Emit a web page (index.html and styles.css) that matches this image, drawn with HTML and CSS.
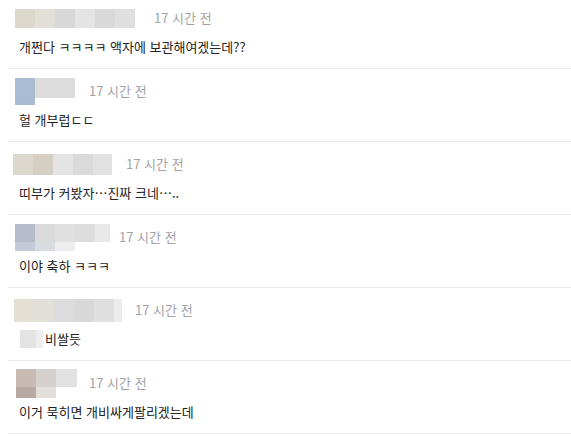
FILE: index.html
```html
<!DOCTYPE html>
<html lang="ko">
<head>
<meta charset="utf-8">
<link rel="stylesheet" href="styles.css">
</head>
<body>
<div class="list">
  <div class="comment">
    <div class="head"><span class="mosaic m1"></span><span class="time g19">17 시간 전</span></div>
    <p class="text">개쩐다 ㅋㅋㅋㅋ 액자에 보관해여겠는데??</p>
  </div>
  <div class="comment">
    <div class="head"><span class="mosaic m2"></span><span class="time g14">17 시간 전</span></div>
    <p class="text">헐 개부럽ㄷㄷ</p>
  </div>
  <div class="comment">
    <div class="head"><span class="mosaic m3"></span><span class="time g14">17 시간 전</span></div>
    <p class="text">띠부가 커봤자…진짜 크네…..</p>
  </div>
  <div class="comment">
    <div class="head"><span class="mosaic m4"></span><span class="time g9">17 시간 전</span></div>
    <p class="text">이야 축하 ㅋㅋㅋ</p>
  </div>
  <div class="comment">
    <div class="head"><span class="mosaic m5"></span><span class="time g13">17 시간 전</span></div>
    <p class="text"><span class="hidden-word"></span>비쌀듯</p>
  </div>
  <div class="comment">
    <div class="head"><span class="mosaic m6"></span><span class="time g12">17 시간 전</span></div>
    <p class="text">이거 묵히면 개비싸게팔리겠는데</p>
  </div>
</div>
</body>
</html>
```
FILE: styles.css
```css
html, body {
  margin: 0;
  padding: 0;
  background: #ffffff;
}
body {
  padding-left: 8px;
  font-family: "Noto Sans CJK KR", "Noto Sans", sans-serif;
  overflow: hidden;
}
.list {
  margin-top: -4px;
}
.comment {
  height: 72px;
  border-bottom: 1px solid #e9e9e9;
  padding-left: 11px;
  box-sizing: content-box;
  display: flex;
  flex-direction: column;
}
.head {
  display: flex;
  align-items: center;
  height: 24px;
  margin-top: 10px;
}
.mosaic {
  display: block;
  margin-left: -4px;
  flex: none;
}
.time {
  font-size: 13px;
  color: #a3a3a3;
  line-height: 18px;
  white-space: nowrap;
}
.g19 { margin-left: 19px; }
.g14 { margin-left: 14px; }
.g13 { margin-left: 13px; }
.g12 { margin-left: 12px; }
.g9 { margin-left: 9px; }
.text {
  margin: 8px 0 0 0;
  font-size: 13px;
  line-height: 18px;
  color: #222222;
  display: flex;
  align-items: center;
}
.hidden-word {
  display: inline-block;
  width: 23px;
  height: 18px;
  margin-left: 1px;
  margin-right: 2px;
  background: linear-gradient(90deg, #e3e3e3 0 16px, #eeeeee 16px 23px);
}
.m1 {
  width: 120px;
  height: 19px;
  background: linear-gradient(90deg, #dcd7cb 0 20px, #e2dfd7 20px 40px, #d8d8d8 40px 60px, #e4e4e4 60px 80px, #d9d9d9 80px 100px, #dfdfdf 100px 120px);
}
.m2 {
  width: 60px;
  height: 27px;
  background:
    linear-gradient(90deg, #a9bcd3 0 20px, #dcdcdc 20px 60px) top left / 60px 20px no-repeat,
    linear-gradient(90deg, #a9bbd2 0 20px, #ffffff 20px 60px) bottom left / 60px 7px no-repeat;
}
.m3 {
  width: 99px;
  height: 21px;
  margin-left: -6px;
  background: linear-gradient(90deg, #dcd8ce 0 20px, #d5cfc3 20px 40px, #e4e4e4 40px 60px, #dadada 60px 80px, #e2e2e2 80px 99px);
}
.m4 {
  width: 95px;
  height: 27px;
  background:
    linear-gradient(90deg, #b4bccc 0 20px, #dadada 20px 40px, #e0e0e0 40px 60px, #dcdcdc 60px 80px, #e8e8e8 80px 95px) top left / 95px 18px no-repeat,
    linear-gradient(90deg, #c4cad6 0 20px, #d8dbe0 20px 40px, #ededed 40px 60px, #ffffff 60px 95px) bottom left / 95px 9px no-repeat;
}
.m5 {
  width: 108px;
  height: 23px;
  margin-left: -5px;
  background: linear-gradient(90deg, #e3dfd3 0 20px, #e2dfd9 20px 40px, #dcdcdc 40px 60px, #d8d8d8 60px 80px, #dfdfdf 80px 100px, #ececec 100px 108px);
}
.m6 {
  width: 61px;
  height: 29px;
  margin-left: -3px;
  background:
    linear-gradient(90deg, #c9bbb4 0 20px, #d5d0cc 20px 40px, #e2e2e2 40px 61px) top left / 61px 18px no-repeat,
    linear-gradient(90deg, #b8a8a2 0 20px, #e3dfdb 20px 40px, #ffffff 40px 61px) bottom left / 61px 11px no-repeat;
}
```
